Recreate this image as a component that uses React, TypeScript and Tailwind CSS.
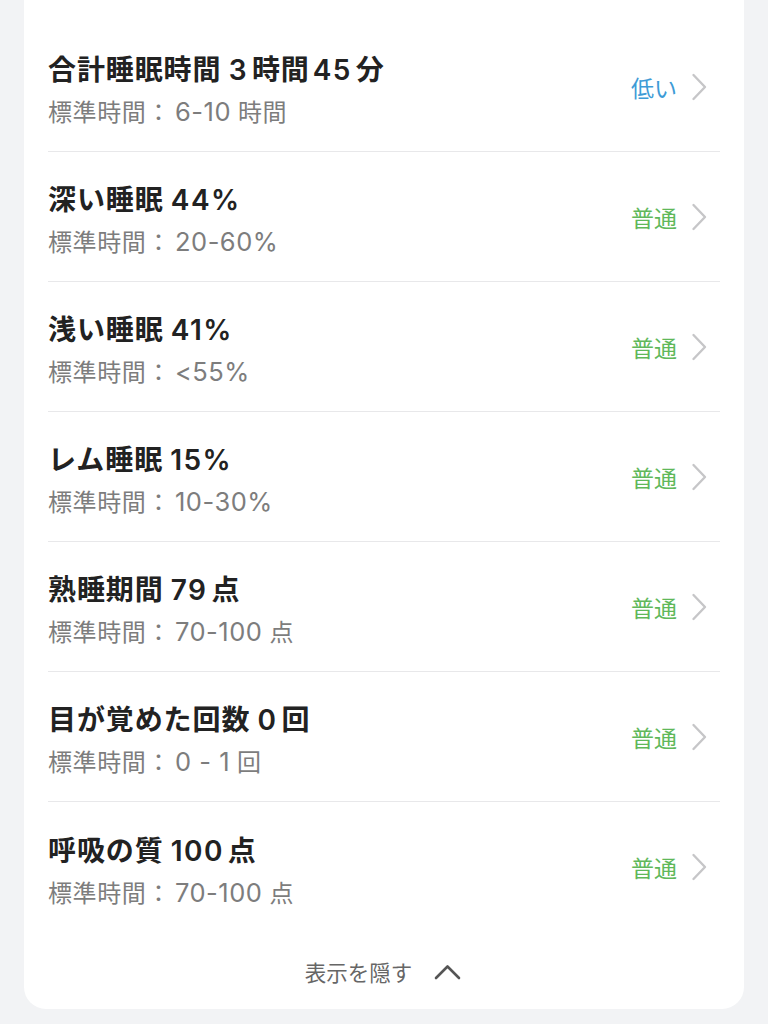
import React from "react";

type Row = { title: string; sub: string; status: string; color: string };

const rows: Row[] = [
  { title: "合計睡眠時間 3時間45分", sub: "標準時間：6-10時間", status: "低い", color: "text-[#3d9bd6]" },
  { title: "深い睡眠 44%", sub: "標準時間：20-60%", status: "普通", color: "text-[#5fb85a]" },
  { title: "浅い睡眠 41%", sub: "標準時間：<55%", status: "普通", color: "text-[#5fb85a]" },
  { title: "レム睡眠 15%", sub: "標準時間：10-30%", status: "普通", color: "text-[#5fb85a]" },
  { title: "熟睡期間 79点", sub: "標準時間：70-100点", status: "普通", color: "text-[#5fb85a]" },
  { title: "目が覚めた回数 0回", sub: "標準時間：0 - 1回", status: "普通", color: "text-[#5fb85a]" },
  { title: "呼吸の質 100点", sub: "標準時間：70-100点", status: "普通", color: "text-[#5fb85a]" },
];

const font = { fontFamily: '"Noto Sans CJK JP", "Noto Sans", sans-serif' };
const latin = { fontFamily: 'Inter, "Noto Sans", sans-serif' };

function Mixed({ text, kind }: { text: string; kind: "title" | "sub" }) {
  const parts = text.split(/([<0-9][0-9%\- ]*[0-9%]|[0-9])/g).filter((p) => p !== "");
  return (
    <>
      {parts.map((p, i) => {
        if (/^[<0-9]/.test(p)) {
          const prev = parts[i - 1] || "";
          const next = parts[i + 1] || "";
          const ml = prev && !prev.endsWith(" ") ? (kind === "title" ? "ml-[3px]" : "ml-[4px]") : "";
          const mr = next ? (kind === "title" ? "mr-[4px]" : "mr-[7px]") : "";
          return (
            <span
              key={i}
              style={latin}
              className={`${ml} ${mr} ${kind === "title" ? "tracking-[1.4px] font-semibold" : "text-[25.5px] tracking-[0.5px] font-normal"}`}
            >
              {p}
            </span>
          );
        }
        return <span key={i}>{p}</span>;
      })}
    </>
  );
}

function Chevron() {
  return (
    <svg width="17" height="28" viewBox="0 0 17 28" fill="none">
      <path d="M2.5 2 L14 14 L2.5 26" stroke="#c6c6c8" strokeWidth="2.4" strokeLinecap="round" strokeLinejoin="round" />
    </svg>
  );
}

export default function App() {
  return (
    <div className="w-[768px] h-[1024px] bg-[#f2f3f5] overflow-hidden" style={font}>
      <div className="mx-[24px] bg-white rounded-b-[22px] pt-[22px] px-[24px]">
        {rows.map((r, i) => (
          <div
            key={i}
            className={`h-[130px] flex items-center justify-between ${i < rows.length - 1 ? "border-b border-[#e8e8ea]" : ""}`}
          >
            <div className="flex flex-col pt-[6px]">
              <div className="text-[28px] leading-[36px] font-bold tracking-[0.9px] text-[#222]">
                <Mixed text={r.title} kind="title" />
              </div>
              <div className="text-[24px] leading-[34px] mt-[6px] tracking-[0.6px] text-[#7d7d7d]">
                <Mixed text={r.sub} kind="sub" />
              </div>
            </div>
            <div className="flex items-center gap-[14px] pr-[12px]">
              <span className={`text-[23px] leading-[30px] ${r.color}`}>{r.status}</span>
              <Chevron />
            </div>
          </div>
        ))}
        <div className="h-[77px] flex items-start justify-center pt-[25px] gap-[22px] pr-[2px]">
          <span className="text-[21.5px] leading-[30px] text-[#666]">表示を隠す</span>
          <svg width="27" height="16" viewBox="0 0 27 16" className="mt-[7px]" fill="none">
            <path d="M2 14 L13.5 2.5 L25 14" stroke="#555" strokeWidth="2.6" strokeLinecap="round" strokeLinejoin="round" />
          </svg>
        </div>
      </div>
    </div>
  );
}
